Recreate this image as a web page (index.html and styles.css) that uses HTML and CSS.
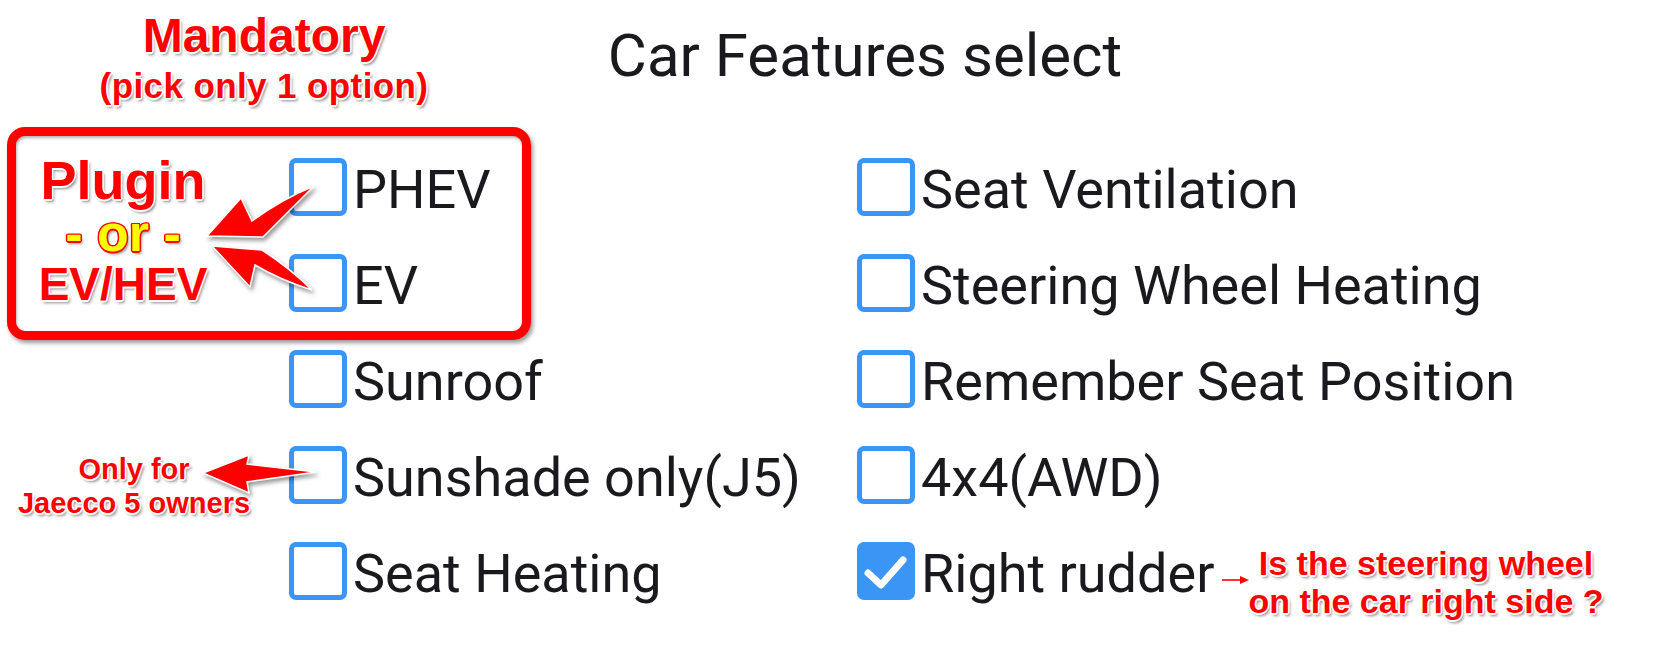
FILE: index.html
```html
<!DOCTYPE html>
<html lang="en">
<head>
<meta charset="utf-8">
<title>Car Features select</title>
<link rel="stylesheet" href="styles.css">
</head>
<body>
<div class="page">
  <main class="content">
    <h1 class="title">Car Features select</h1>
    <div class="columns">
      <div class="col col-left">
        <label class="opt"><span class="box"></span><span class="lbl">PHEV</span></label>
        <label class="opt"><span class="box"></span><span class="lbl">EV</span></label>
        <label class="opt"><span class="box"></span><span class="lbl">Sunroof</span></label>
        <label class="opt"><span class="box"></span><span class="lbl">Sunshade only(J5)</span></label>
        <label class="opt"><span class="box"></span><span class="lbl">Seat Heating</span></label>
      </div>
      <div class="col col-right">
        <label class="opt"><span class="box"></span><span class="lbl">Seat Ventilation</span></label>
        <label class="opt"><span class="box"></span><span class="lbl">Steering Wheel Heating</span></label>
        <label class="opt"><span class="box"></span><span class="lbl">Remember Seat Position</span></label>
        <label class="opt"><span class="box"></span><span class="lbl">4x4(AWD)</span></label>
        <label class="opt"><span class="box checked"><svg viewBox="0 0 58 58" width="58" height="58"><path d="M11 31 L24 43 L46 18" fill="none" stroke="#fff" stroke-width="7" stroke-linecap="round" stroke-linejoin="round"/></svg></span><span class="lbl">Right rudder</span></label>
      </div>
    </div>
  </main>

  <div class="note note-mandatory">
    <div class="m1">Mandatory</div>
    <div class="m2">(pick only 1 option)</div>
  </div>
  <div class="frame"></div>
  <div class="note note-plugin">
    <div class="p1">Plugin</div>
    <div class="p2">- or -</div>
    <div class="p3">EV/HEV</div>
  </div>
  <div class="note note-j5">
    <div class="j1">Only for</div>
    <div class="j2">Jaecco 5 owners</div>
  </div>
  <div class="note note-rudder">
    <div>Is the steering wheel</div>
    <div>on the car right side ?</div>
  </div>
  <svg class="arrows" viewBox="0 0 1661 652" width="1661" height="652">
    <g class="big">
      <path d="M207 236 L241 198 L252 221 Q282 199 314 186 Q288 212 263 237 Z"/>
      <path d="M212 246 L262 250 Q290 268 312 290 Q280 280 255 265 L250 287 Z"/>
      <path d="M203 473 L249 455 L247 464 L316 472 L247 482 L249 493 Z"/>
    </g>
    <g class="small">
      <line x1="1222" y1="580" x2="1242" y2="580"/>
      <path d="M1240 576 L1249 580 L1240 584 Z"/>
    </g>
  </svg>
</div>
</body>
</html>
```

FILE: styles.css
```css
* { box-sizing: border-box; }
html, body { margin: 0; padding: 0; background: #ffffff; }
body { width: 1661px; height: 652px; overflow: hidden; }

.page {
  position: relative;
  width: 1661px;
  height: 652px;
}

.content {
  margin-left: 289px;
  padding-top: 21px;
  width: 1152px;
  font-family: Roboto, "Noto Sans", sans-serif;
  color: #1a1a1e;
}

.title {
  margin: 0;
  font-size: 60px;
  line-height: 70px;
  font-weight: 400;
  text-align: center;
}

.columns {
  display: flex;
  margin-top: 67px;
}

.col {
  display: flex;
  flex-direction: column;
  gap: 38px;
  flex-shrink: 0;
}
.col-left { width: 568px; }

.opt {
  display: flex;
  align-items: center;
  gap: 6px;
  height: 58px;
}

.box {
  flex: 0 0 58px;
  width: 58px;
  height: 58px;
  border: 5px solid #3b95f4;
  border-radius: 7px;
  background: #fff;
  position: relative;
}
.box.checked {
  background: #3b95f4;
  border-color: #3b95f4;
}
.box.checked svg {
  position: absolute;
  left: -5px;
  top: -5px;
}

.lbl {
  font-size: 54px;
  line-height: 58px;
  padding-top: 6px;
  white-space: nowrap;
}

/* annotations */
.note {
  position: absolute;
  font-family: "Liberation Sans", Arial, sans-serif;
  font-weight: 700;
  color: #ff0000;
  text-align: center;
  line-height: 1;
  white-space: nowrap;
  text-shadow:
    -1.5px 0 #fff, 1.5px 0 #fff, 0 -1.5px #fff, 0 1.5px #fff,
    -1px -1px #fff, 1px -1px #fff, -1px 1px #fff, 1px 1px #fff,
    2px 3px 3px rgba(0, 0, 0, 0.45);
}

.note-mandatory { left: 64px; top: 12px; width: 400px; }
.m1 { font-size: 48px; }
.m2 { font-size: 35px; margin-top: 8px; letter-spacing: 0.4px; }

.frame {
  position: absolute;
  left: 7px;
  top: 127px;
  width: 524px;
  height: 213px;
  border: 9px solid #ff0000;
  border-radius: 18px;
  box-shadow: 2px 3px 4px rgba(0, 0, 0, 0.4), inset 1px 2px 3px rgba(0, 0, 0, 0.3);
}

.note-plugin { left: 23px; top: 153px; width: 200px; }
.p1 { font-size: 54px; }
.p2 {
  font-size: 52px;
  margin-top: 0;
  color: #ffff00;
  text-shadow:
    -1.5px 0 #f00, 1.5px 0 #f00, 0 -1.5px #f00, 0 1.5px #f00,
    -1px -1px #f00, 1px -1px #f00, -1px 1px #f00, 1px 1px #f00,
    2px 3px 3px rgba(0, 0, 0, 0.4);
}
.p3 { font-size: 46px; margin-top: 2px; }

.note-j5 { left: 14px; top: 455px; width: 240px; }
.j1 { font-size: 29px; }
.j2 { font-size: 29px; margin-top: 5px; }

.note-rudder {
  left: 1226px;
  top: 544px;
  width: 400px;
  font-size: 34px;
  line-height: 38px;
}

.arrows {
  position: absolute;
  left: 0;
  top: 0;
  pointer-events: none;
}
.arrows .big path {
  fill: #ff0000;
  stroke: #ffffff;
  stroke-width: 1.5;
  stroke-linejoin: miter;
  filter: drop-shadow(2px 3px 2px rgba(0, 0, 0, 0.4));
}
.arrows .small line {
  stroke: #ff0000;
  stroke-width: 1.6;
}
.arrows .small path {
  fill: #ff0000;
}
```
